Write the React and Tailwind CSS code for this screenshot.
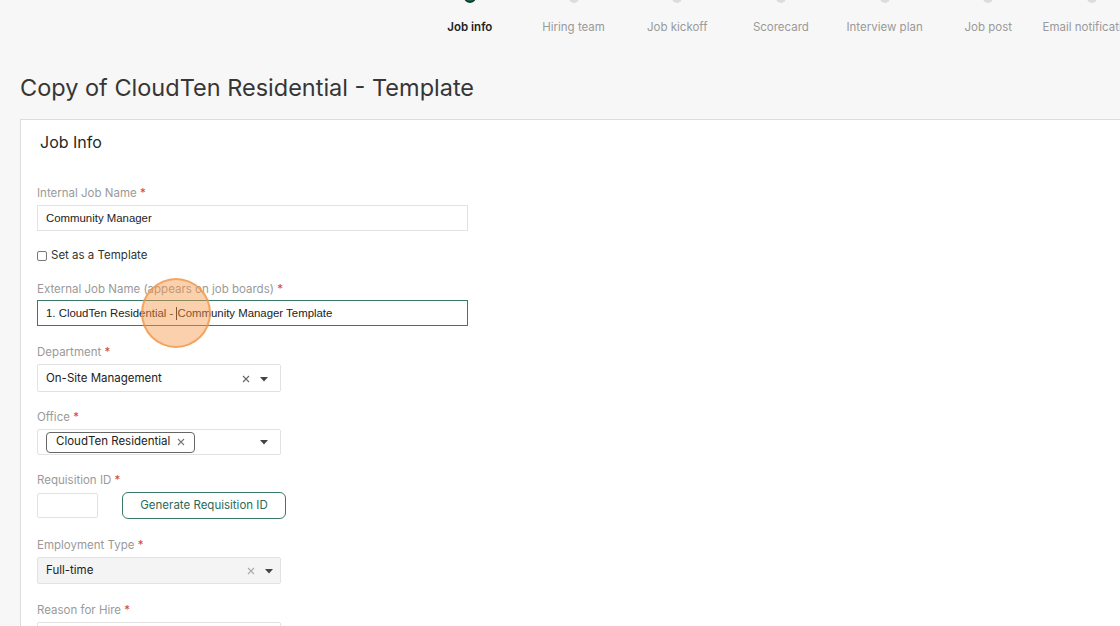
const steps = [
  "Job info",
  "Hiring team",
  "Job kickoff",
  "Scorecard",
  "Interview plan",
  "Job post",
  "Email notifications",
];

const font = "font-['Inter',sans-serif]";
const arial = "font-['Liberation_Sans',Arial,sans-serif]";

function Label({ children, className = "" }) {
  return (
    <div className={`text-[11.5px] leading-4 text-[#9a9a9a] ${font} ${className}`}>
      {children} <span className="text-[#d4463e]">*</span>
    </div>
  );
}

function Caret() {
  return (
    <svg width="10" height="10" viewBox="0 0 10 10" className="shrink-0">
      <path d="M1 3h8L5 7.5z" fill="#444" />
    </svg>
  );
}

function Cross({ color = "#555" }) {
  return (
    <svg width="8" height="8" viewBox="0 0 8 8" className="shrink-0">
      <path d="M1 1l6 6M7 1L1 7" stroke={color} strokeWidth="1.1" />
    </svg>
  );
}

export default function App() {
  return (
    <div className="w-[1120px] h-[626px] overflow-hidden bg-[#f7f7f7]">
      {/* ── Stepper ── */}
      <div className="flex pl-[418px]">
        {steps.map((s, i) => (
          <div key={s} className="w-[103.7px] shrink-0 flex flex-col items-center">
            {i === 0 ? (
              <div className="w-[12px] h-[12px] -mt-[9px] rounded-full bg-[#1b6e53] border-2 border-[#0f3f30]" />
            ) : (
              <div className="w-[10px] h-[10px] -mt-[7px] rounded-full bg-[#dcdcdc]" />
            )}
            <div
              className={`mt-[16px] text-[11.5px] leading-4 whitespace-nowrap ${font} ${
                i === 0 ? "font-semibold text-[#222]" : "text-[#9a9a9a]"
              }`}
            >
              {s}
            </div>
          </div>
        ))}
      </div>

      {/* ── Title ── */}
      <h1 className={`ml-5 mt-[37px] text-[23.5px] leading-8 text-[#363636] ${font}`}>
        Copy of CloudTen Residential - Template
      </h1>

      {/* ── Card ── */}
      <div className="relative ml-5 mt-[15px] w-[1120px] bg-white border border-[#dcdcdc] pt-[10px] px-4 pb-10">
        <div className={`ml-[3px] text-[16px] leading-6 text-[#1f2a26] ${font}`}>Job Info</div>

        <Label className="mt-[31px]">Internal Job Name</Label>
        <div className={`mt-1 w-[431px] h-[26px] flex items-center pt-[2px] px-[8px] border border-[#e2e2e2] text-[11.4px] text-[#222] ${arial}`}>
          Community Manager
        </div>

        <div className={`mt-[17px] flex items-center h-4 text-[11.5px] text-[#333] ${font}`}>
          <div className="w-[10px] h-[10px] border border-[#777] rounded-[2px] bg-white" />
          <span className="ml-[4px]">Set as a Template</span>
        </div>

        <Label className="mt-[17px]">External Job Name (appears on job boards)</Label>
        <div className={`mt-[3px] w-[431px] h-[26px] flex items-center pt-[1px] px-[8px] border-[1.5px] border-[#3a7a68] text-[11.4px] text-[#222] whitespace-pre ${arial}`}>
          1. CloudTen Residential - <span className="border-l border-[#222] h-[13px]" />Community Manager Template
        </div>

        <Label className="mt-[18px]">Department</Label>
        <div className={`mt-1 w-[244px] h-[28px] flex items-center pt-[1px] pl-[8px] pr-[11px] border border-[#e2e2e2] rounded-[2px] text-[11.5px] text-[#222] ${font}`}>
          <span className="flex-1">On-Site Management</span>
          <Cross color="#666" />
          <span className="ml-[9px]"><Caret /></span>
        </div>

        <Label className="mt-[17px]">Office</Label>
        <div className={`mt-1 w-[244px] h-[26px] flex items-center pl-[8px] pr-[11px] border border-[#e2e2e2] rounded-[2px] text-[11.5px] text-[#222] ${font}`}>
          <div className="h-[21px] w-[149px] shrink-0 flex items-center gap-[7px] px-[9px] border border-[#666] rounded-[4px] whitespace-nowrap">
            <span>CloudTen Residential</span>
            <Cross color="#777" />
          </div>
          <span className="flex-1" />
          <Caret />
        </div>

        <Label className="mt-[17px]">Requisition ID</Label>
        <div className="mt-1 flex items-center h-[27px]">
          <div className="w-[61px] h-[25px] border border-[#e2e2e2] rounded-[2px]" />
          <div className={`ml-[24px] w-[164px] h-[27px] flex items-center justify-center pt-[1px] border border-[#3a7a68] rounded-[6px] text-[11.5px] text-[#2c6a58] ${font}`}>
            Generate Requisition ID
          </div>
        </div>

        <Label className="mt-[18px]">Employment Type</Label>
        <div className={`mt-1 w-[244px] h-[27px] flex items-center pt-[1px] pl-[8px] pr-[6px] bg-[#f4f4f4] border border-[#e2e2e2] rounded-[2px] text-[11.5px] text-[#222] ${font}`}>
          <span className="flex-1">Full-time</span>
          <Cross color="#aaa" />
          <span className="ml-[9px]"><Caret /></span>
        </div>

        <Label className="mt-[18px]">Reason for Hire</Label>
        <div className="mt-1 w-[244px] h-[28px] border border-[#e2e2e2] rounded-[2px]" />

        {/* click highlight */}
        <div className="absolute left-[120px] top-[158px] w-[70px] h-[70px] rounded-full bg-[rgba(246,150,70,0.45)] border-2 border-[rgba(240,150,70,0.75)]" />
      </div>
    </div>
  );
}
